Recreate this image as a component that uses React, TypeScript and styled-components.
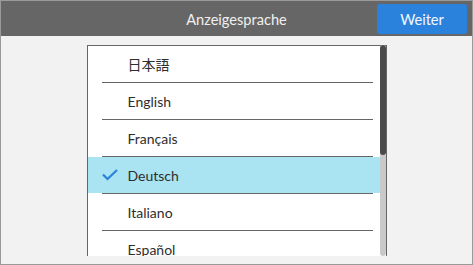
import styled, { createGlobalStyle } from "styled-components";

const GlobalStyle = createGlobalStyle`
  html, body {
    margin: 0;
    padding: 0;
    background: #f2f2f2;
  }
  * {
    box-sizing: border-box;
  }
`;

const Window = styled.div`
  width: 473px;
  height: 265px;
  border: 1px solid #9a9a9a;
  background: #f2f2f2;
  display: flex;
  flex-direction: column;
  font-family: Lato, "Noto Sans CJK JP", sans-serif;
  overflow: hidden;
`;

const Header = styled.div`
  height: 35px;
  flex-shrink: 0;
  background: #666666;
  display: grid;
  grid-template-columns: 1fr auto 1fr;
  align-items: center;
`;

const Title = styled.h1`
  grid-column: 2;
  margin: 0;
  font-size: 14.6px;
  font-weight: 400;
  color: #f0f0f0;
  padding-top: 1px;
`;

const NextButton = styled.button`
  grid-column: 3;
  justify-self: end;
  align-self: start;
  width: 90px;
  height: 30px;
  margin: 3px 5px 0 0;
  border: none;
  border-radius: 3px;
  background: #2b82dc;
  color: #f4f8fd;
  font-family: Lato, sans-serif;
  font-size: 14.6px;
  cursor: pointer;
`;

const Body = styled.div`
  flex: 1;
  display: flex;
  justify-content: center;
  padding: 9px 0 8px;
  min-height: 0;
`;

const ListBox = styled.div`
  width: 300px;
  border: 1px solid #666666;
  border-bottom: none;
  background: #ffffff;
  display: flex;
  min-height: 0;
`;

const Items = styled.ul`
  flex: 1;
  list-style: none;
  margin: 0;
  padding: 0;
  overflow: hidden;
`;

const Item = styled.li<{ $selected?: boolean }>`
  height: 37px;
  display: flex;
  align-items: center;
  position: relative;
  padding-bottom: 1px;
  background: ${({ $selected }) =>
    $selected ? "linear-gradient(#aae3f1, #aae3f1) top / 100% 36px no-repeat" : "transparent"};
  color: #2e2e2e;
  font-size: 14px;

  &::after {
    content: "";
    position: absolute;
    bottom: 0;
    left: 14px;
    right: 7px;
    height: 1px;
    background: #666666;
  }
`;

const CheckSlot = styled.span`
  width: 40px;
  padding-left: 14px;
  display: flex;
  align-items: center;
`;

const Label = styled.span``;

const Scrollbar = styled.div`
  width: 6px;
  margin-top: -1px;
  border-radius: 3px;
  background: #c9c9c9;
  display: flex;
  flex-direction: column;
  overflow: hidden;
`;

const Thumb = styled.div`
  height: 110px;
  border-radius: 3px;
  background: #4a4a4a;
`;

const languages = [
  "日本語",
  "English",
  "Français",
  "Deutsch",
  "Italiano",
  "Español",
  "Português",
  "Nederlands",
];

function Check() {
  return (
    <svg width="16" height="12" viewBox="0 0 16 12">
      <path
        d="M1 5.5 L5.5 10 L15 1"
        fill="none"
        stroke="#2b82dc"
        strokeWidth="2.2"
      />
    </svg>
  );
}

export default function App() {
  const selected = "Deutsch";
  return (
    <>
      <GlobalStyle />
      <Window>
        <Header>
          <Title>Anzeigesprache</Title>
          <NextButton>Weiter</NextButton>
        </Header>
        <Body>
          <ListBox>
            <Items>
              {languages.map((lang) => (
                <Item key={lang} $selected={lang === selected}>
                  <CheckSlot>{lang === selected && <Check />}</CheckSlot>
                  <Label>{lang}</Label>
                </Item>
              ))}
            </Items>
            <Scrollbar>
              <Thumb />
            </Scrollbar>
          </ListBox>
        </Body>
      </Window>
    </>
  );
}
